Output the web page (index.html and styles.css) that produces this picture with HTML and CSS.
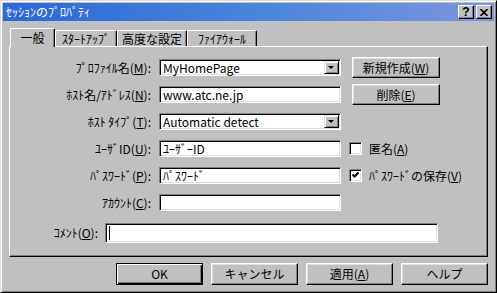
FILE: index.html
```html
<!DOCTYPE html>
<html lang="ja">
<head>
    <meta charset="UTF-8">
    <title>ｾｯｼｮﾝのﾌﾟﾛﾊﾟﾃｨ</title>
    <link rel="stylesheet" href="styles.css">
</head>
<body>
    <div class="dialog">
        <div class="titlebar">
            <span class="title">ｾｯｼｮﾝのﾌﾟﾛﾊﾟﾃｨ</span>
            <div class="caption-btns">
                <span class="cbtn help">?</span>
                <span class="cbtn">
                    <svg width="8" height="7" viewBox="0 0 8 7"><path d="M0.5 0 L7.5 7 M7.5 0 L0.5 7" stroke="#000" stroke-width="1.7"/></svg>
                </span>
            </div>
        </div>
        <div class="content">
            <div class="tabs">
                <div class="tab active">一般</div>
                <div class="tab tab-start">ｽﾀｰﾄｱｯﾌﾟ</div>
                <div class="tab tab-wide">高度な設定</div>
                <div class="tab tab-wide">ﾌｧｲｱｳｫｰﾙ</div>
            </div>
            <div class="panel">
                <div class="form">
                    <label>ﾌﾟﾛﾌｧｲﾙ名(<u>M</u>):</label>
                    <div class="field combo"><span>MyHomePage</span><span class="arrow"></span></div>
                    <button class="btn side">新規作成(<u>W</u>)</button>

                    <label>ﾎｽﾄ名/ｱﾄﾞﾚｽ(<u>N</u>):</label>
                    <div class="field">www.atc.ne.jp</div>
                    <button class="btn side">削除(<u>E</u>)</button>

                    <label>ﾎｽﾄ ﾀｲﾌﾟ(<u>T</u>):</label>
                    <div class="field combo"><span>Automatic detect</span><span class="arrow"></span></div>
                    <span></span>

                    <label>ﾕｰｻﾞID(<u>U</u>):</label>
                    <div class="field">ﾕｰｻﾞｰID</div>
                    <div class="check"><span class="box"></span><span>匿名(<u>A</u>)</span></div>

                    <label>ﾊﾟｽﾜｰﾄﾞ(<u>P</u>):</label>
                    <div class="field">ﾊﾟｽﾜｰﾄﾞ</div>
                    <div class="check"><span class="box"><svg width="7" height="7" viewBox="0 0 7 7"><path d="M0.5 2.5 L2.5 4.5 L6.5 0.5" fill="none" stroke="#000" stroke-width="2"/></svg></span><span>ﾊﾟｽﾜｰﾄﾞの保存(<u>V</u>)</span></div>

                    <label>ｱｶｳﾝﾄ(<u>C</u>):</label>
                    <div class="field"></div>
                    <span></span>
                </div>
                <div class="comment-row">
                    <label>ｺﾒﾝﾄ(<u>O</u>):</label>
                    <div class="field comment"><span class="caret"></span></div>
                </div>
            </div>
            <div class="actions">
                <button class="btn default">OK</button>
                <button class="btn">キャンセル</button>
                <button class="btn">適用(<u>A</u>)</button>
                <button class="btn">ヘルプ</button>
            </div>
        </div>
    </div>
</body>
</html>
```
FILE: styles.css
```css
* { box-sizing: border-box; }
body { margin: 0; background: #c0c0c0; font-family: "Noto Sans CJK JP", "Liberation Sans", sans-serif; font-size: 12px; line-height: 14px; color: #000; }
u { text-decoration: underline; text-underline-offset: 1px; }

.dialog { width: 497px; height: 293px; background: #c0c0c0; border: 1px solid; border-color: #dfdfdf #000 #000 #dfdfdf; box-shadow: inset 1px 1px #fff, inset -1px -1px #808080; padding: 2px; }

.titlebar { height: 18px; display: flex; align-items: center; justify-content: space-between; padding: 0 2px 0 3px; color: #fff;
    background: linear-gradient(to right, #2a68d6, #4a87dc 55%, #7d94e0); }
.caption-btns { display: flex; gap: 2px; }
.cbtn { width: 16px; height: 14px; background: #c0c0c0; border: 1px solid; border-color: #fff #000 #000 #fff; box-shadow: inset -1px -1px #808080; display: flex; align-items: center; justify-content: center; }
.cbtn.help { color: #000; font-family: "Liberation Sans", sans-serif; font-weight: bold; font-size: 12px; line-height: 12px; }

.content { padding: 7px 6px 0 6px; }

.tabs { height: 18px; display: flex; align-items: flex-end; padding-left: 1px; }
.tab { height: 16px; padding: 0 4px; text-align: center; border: 1px solid; border-bottom: none; border-color: #fff #000 #000 #fff; border-radius: 2px 2px 0 0; box-shadow: inset -1px 0 #808080; line-height: 15px; white-space: nowrap; }
.tab.active { width: 45px; height: 19px; margin-bottom: -1px; line-height: 17px; position: relative; z-index: 1; background: #c0c0c0; }
.tab-start { width: 62px; }
.tab-wide { width: 70px; }

.panel { height: 211px; border: 1px solid; border-color: #fff #000 #000 #fff; box-shadow: inset -1px -1px #808080; padding-top: 10px; }

.form { display: grid; grid-template-columns: 141px 182px auto; grid-auto-rows: 21px; column-gap: 8px; row-gap: 6px; align-items: center; }
.form label { text-align: right; white-space: nowrap; }

.field { height: 17px; background: #fff; border: 1px solid; border-color: #808080 #fff #fff #808080; box-shadow: inset 1px 1px #000, inset -1px -1px #dfdfdf; padding: 0 3px; display: flex; align-items: center; white-space: nowrap; }
.field.combo { padding-right: 1px; }
.arrow { margin-left: auto; width: 15px; height: 13px; background: #c0c0c0; border: 1px solid; border-color: #dfdfdf #000 #000 #dfdfdf; box-shadow: inset 1px 1px #fff, inset -1px -1px #808080; position: relative; }
.arrow::after { content: ""; position: absolute; left: 3px; top: 4px; border-style: solid; border-width: 3px 3px 0 3px; border-color: #000 transparent transparent transparent; }

.btn { width: 88px; height: 21px; padding: 0; background: #c0c0c0; border: 1px solid; border-color: #fff #000 #000 #fff; box-shadow: inset -1px -1px #808080, inset 1px 1px #dfdfdf; font: inherit; color: #000; }
.btn.side { margin-left: 3px; }

.check { display: flex; align-items: center; gap: 7px; white-space: nowrap; }
.box { width: 13px; height: 13px; background: #fff; border: 1px solid; border-color: #808080 #fff #fff #808080; box-shadow: inset 1px 1px #000, inset -1px -1px #dfdfdf; display: flex; align-items: center; justify-content: center; }

.comment-row { display: flex; align-items: center; gap: 7px; margin-top: 10px; }
.comment-row label { width: 88px; text-align: right; white-space: nowrap; }
.field.comment { width: 333px; height: 20px; }
.caret { width: 1px; height: 14px; background: #000; }

.actions { display: flex; justify-content: flex-end; gap: 8px; margin-top: 6px; }
.actions .btn { width: 87px; height: 22px; }
.btn.default { border-color: #000; box-shadow: inset 1px 1px #fff, inset -1px -1px #000, inset -2px -2px #808080; }
```
